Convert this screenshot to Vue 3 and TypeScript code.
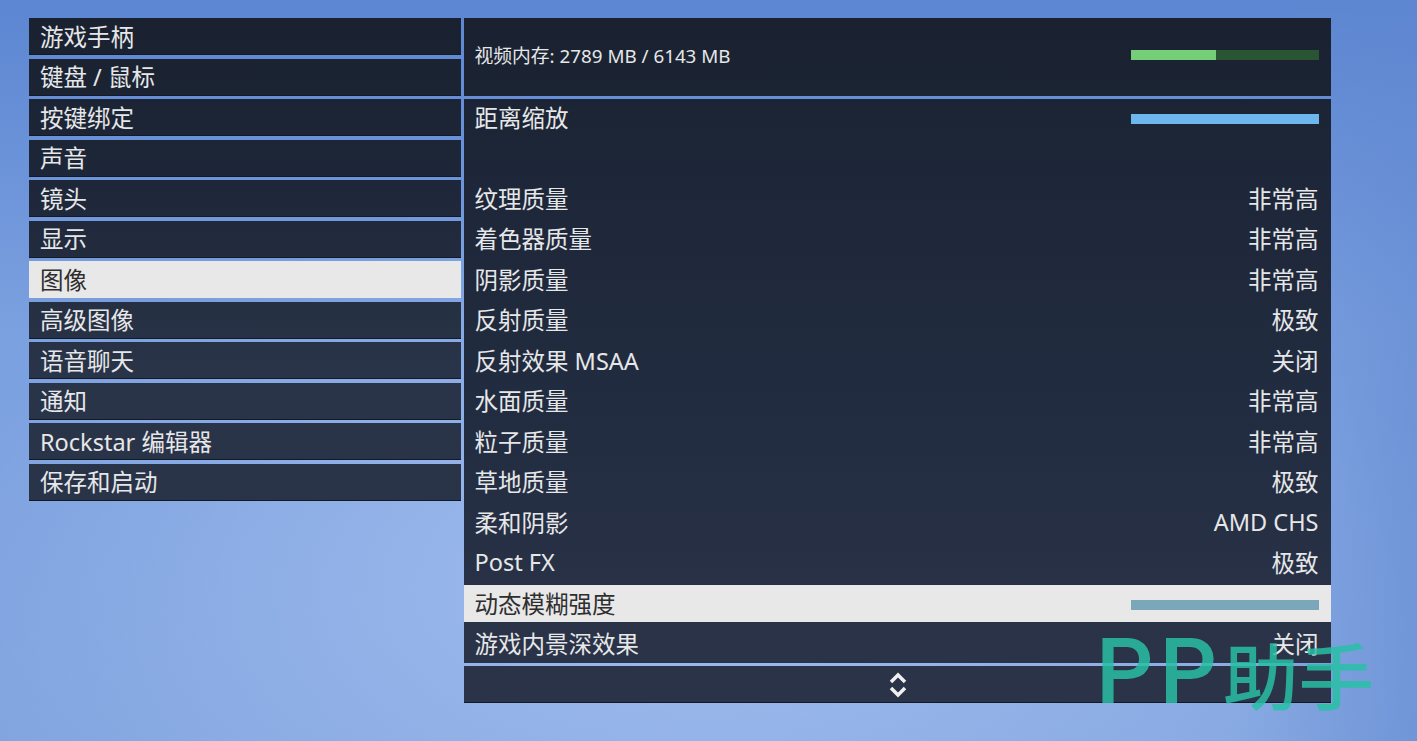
<script setup lang="ts">
interface Setting {
  label: string
  value?: string
  bar?: string
  active?: boolean
}

const menu = [
  '游戏手柄',
  '键盘 / 鼠标',
  '按键绑定',
  '声音',
  '镜头',
  '显示',
  '图像',
  '高级图像',
  '语音聊天',
  '通知',
  'Rockstar 编辑器',
  '保存和启动'
]

const settings: Setting[] = [
  { label: '距离缩放', bar: 'blue' },
  { label: '' },
  { label: '纹理质量', value: '非常高' },
  { label: '着色器质量', value: '非常高' },
  { label: '阴影质量', value: '非常高' },
  { label: '反射质量', value: '极致' },
  { label: '反射效果 MSAA', value: '关闭' },
  { label: '水面质量', value: '非常高' },
  { label: '粒子质量', value: '非常高' },
  { label: '草地质量', value: '极致' },
  { label: '柔和阴影', value: 'AMD CHS' },
  { label: 'Post FX', value: '极致' },
  { label: '动态模糊强度', bar: 'muted', active: true },
  { label: '游戏内景深效果', value: '关闭' }
]

const usedMemory = 2789
const totalMemory = 6143
const memoryPercent = (usedMemory / totalMemory) * 100
</script>

<template>
  <div class="screen">
    <nav class="menu">
      <div
        v-for="item in menu"
        :key="item"
        class="row"
        :class="{ active: item === '图像' }"
      >
        {{ item }}
      </div>
    </nav>

    <main class="content">
      <section class="memory panel">
        <span>视频内存: {{ usedMemory }} MB / {{ totalMemory }} MB</span>
        <div class="bar bar-track">
          <div class="bar-fill" :style="{ width: memoryPercent + '%' }"></div>
        </div>
      </section>

      <section class="list panel">
        <div
          v-for="(s, i) in settings"
          :key="i"
          class="row setting"
          :class="{ active: s.active }"
        >
          <span>{{ s.label }}</span>
          <span v-if="s.value">{{ s.value }}</span>
          <div v-if="s.bar" class="bar" :class="'bar-' + s.bar"></div>
        </div>
      </section>

      <footer class="scroller panel">
        <svg width="18" height="26" viewBox="0 0 18 26" fill="none" stroke="#f0f0f0" stroke-width="3.5">
          <path d="M2 10 L9 3 L16 10" />
          <path d="M2 16 L9 23 L16 16" />
        </svg>
      </footer>
    </main>

    <div class="watermark">
      <span class="mark-latin">PP</span>
      <span class="mark-cjk">助手</span>
    </div>
  </div>
</template>

<style scoped>
.screen {
  position: relative;
  display: flex;
  gap: 3px;
  box-sizing: border-box;
  width: 1417px;
  height: 741px;
  padding: 18px 86px 0 29px;
  overflow: hidden;
  font-family: "Noto Sans", "Noto Sans CJK SC", sans-serif;
  font-size: 23.5px;
  color: #e6e7e8;
  background:
    linear-gradient(270deg, rgba(96, 135, 208, 0.5) 0%, rgba(96, 135, 208, 0) 180px),
    radial-gradient(ellipse 760px 400px at 700px 580px, #a1bdee 0%, rgba(161, 189, 238, 0) 100%),
    linear-gradient(180deg, #5c86d2 0%, #7ca1e0 45%, #82a5e0 100%);
}

.menu {
  display: flex;
  flex-direction: column;
  gap: 3.5px;
  width: 432px;
  flex: none;
}

.row {
  display: flex;
  align-items: center;
  justify-content: space-between;
  box-sizing: border-box;
  height: 37px;
  padding: 0 11px 2px;
  white-space: pre;
  background: linear-gradient(180deg, #19212f 0%, #1e2739 25%, #2a3448 50%, #27334a 100%) fixed;
  box-shadow: inset 0 -1px 0 #121a28;
}

.row.active {
  color: #2e2e2e;
  background: #e8e8e8;
  box-shadow: none;
}

.content {
  display: flex;
  flex-direction: column;
  gap: 3.5px;
  width: 867px;
  flex: none;
}

.panel {
  background: linear-gradient(180deg, #19212f 0%, #1e2739 25%, #222c40 55%, #2a3347 88%) fixed;
}

.memory {
  display: flex;
  align-items: center;
  justify-content: space-between;
  box-sizing: border-box;
  height: 77.5px;
  padding: 0 12px 3.5px 10.5px;
  font-size: 18.8px;
}

.list {
  display: flex;
  flex-direction: column;
  gap: 3.5px;
}

.setting {
  padding-left: 10.5px;
  padding-right: 12.5px;
  background: none;
  box-shadow: none;
}

.setting.active {
  background: #e8e8e8;
}

.bar {
  width: 188px;
  height: 10px;
}

.setting .bar {
  margin: 4.5px -0.5px 0 0;
}

.bar-track {
  background: #2a5534;
}

.bar-fill {
  height: 100%;
  background: #74cf78;
}

.bar-blue {
  background: #6cb8ee;
}

.bar-muted {
  background: #7ba7ba;
}

.scroller {
  display: flex;
  align-items: center;
  justify-content: center;
  height: 37px;
  box-shadow: inset 0 -1px 0 #121a28;
}

.watermark {
  position: absolute;
  left: 1096px;
  top: 626px;
  display: flex;
  align-items: center;
  height: 92px;
  font-weight: 500;
  color: rgba(40, 192, 166, 0.85);
}

.mark-latin {
  font-family: Roboto, sans-serif;
  font-size: 90px;
  letter-spacing: 6px;
}

.mark-cjk {
  font-family: "Noto Sans CJK SC", sans-serif;
  font-size: 72px;
  letter-spacing: 0;
  transform: scaleX(1.05);
  transform-origin: left center;
}
</style>

<style>
body {
  margin: 0;
}
</style>
